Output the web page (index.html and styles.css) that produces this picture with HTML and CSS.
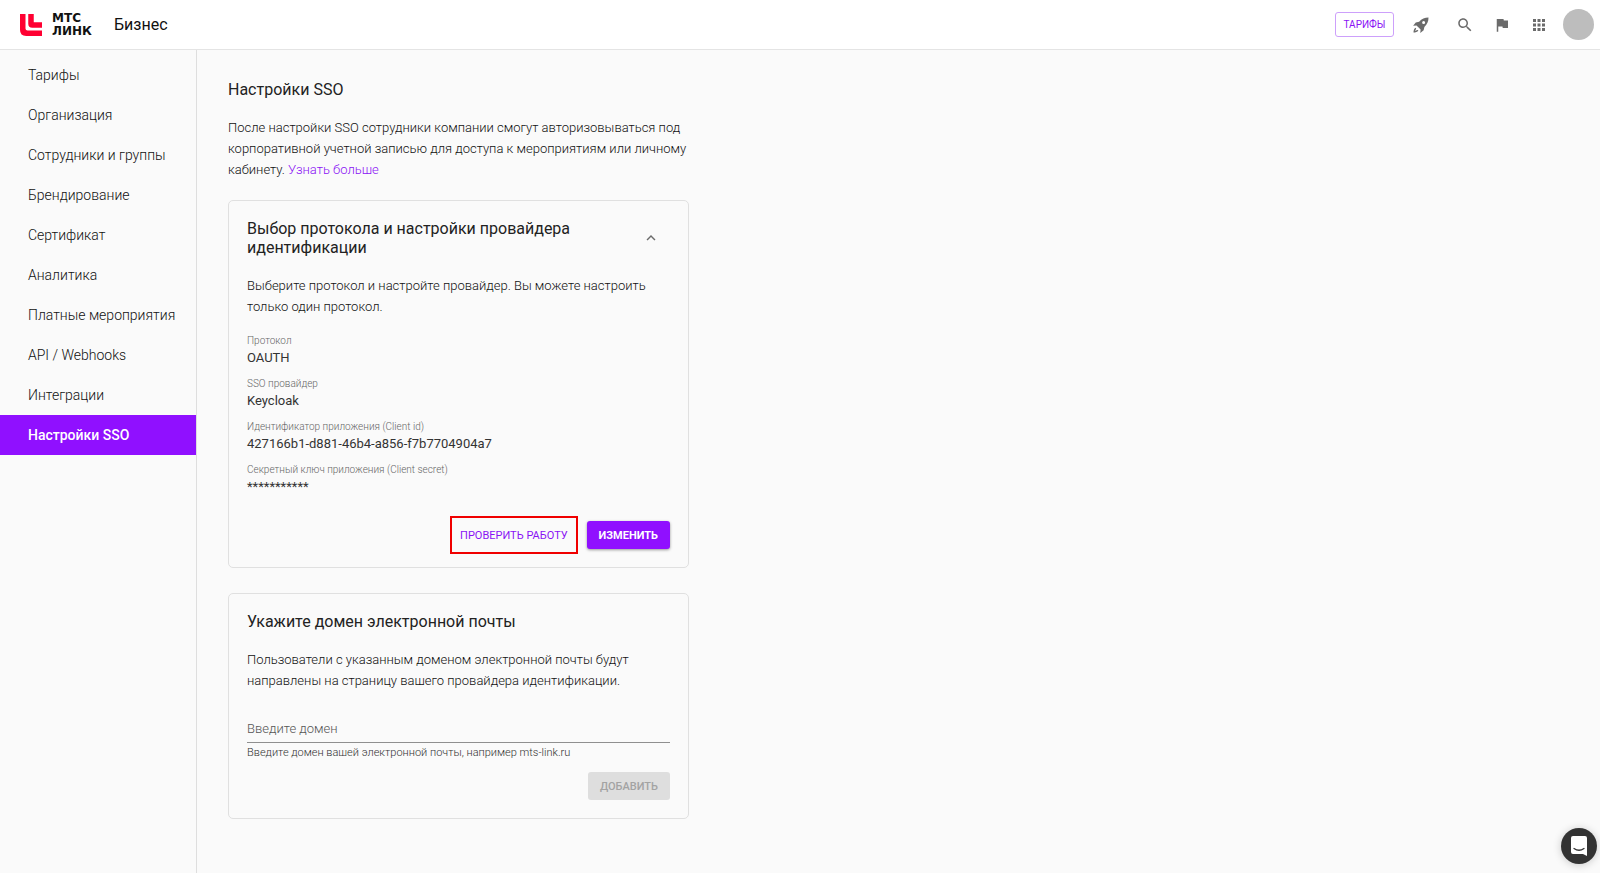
FILE: index.html
```
<!DOCTYPE html>
<html lang="ru">
<head>
    <meta charset="UTF-8">
    <meta name="viewport" content="width=device-width, initial-scale=1.0">
    <title>Настройки SSO</title>
    <link rel="stylesheet" href="styles.css">
</head>
<body>
    <header class="header">
        <a href="#" class="logo">
            <svg width="22" height="22" viewBox="0 0 64 64" fill="#ff0032">
                <path d="M0 0h16v42q0 6 6 6h42v16H18Q0 64 0 46z"/>
                <path d="M24 0h16v24h24v16H36q-12 0-12-12z"/>
            </svg>
            <span class="logo-text">МТС<br>ЛИНК</span>
        </a>
        <span class="section-name">Бизнес</span>
        <div class="header-tools">
            <button type="button" class="tariff-btn">ТАРИФЫ</button>
            <button type="button" class="icon-btn icon-btn-rocket" aria-label="Что нового">
                <svg viewBox="0 0 24 24"><path d="M22 2c-5 0-9 1.500-12.500 5.500L5 8.500 1.500 13l4.500-.5L11.500 18l-.5 4.500 4.500-3.500 1-4.500C20.500 11 22 7 22 2zM15.500 6.500a2 2 0 1 1 0 4 2 2 0 0 1 0-4z" fill-rule="evenodd"/><path d="M5 15.500c-2.500 1-3 4-3 6.500 2.500 0 5.500-.5 6.500-3l-1.500-.5-3 1.500 1.500-3z"/></svg>
            </button>
            <button type="button" class="icon-btn" aria-label="Поиск">
                <svg viewBox="0 0 24 24"><path d="M15.5 14h-.79l-.28-.27C15.41 12.59 16 11.11 16 9.5 16 5.91 13.09 3 9.5 3S3 5.91 3 9.5 5.91 16 9.5 16c1.61 0 3.09-.59 4.23-1.57l.27.28v.79l5 4.99L20.49 19l-4.99-5zm-6 0C7.01 14 5 11.99 5 9.5S7.01 5 9.5 5 14 7.01 14 9.5 11.99 14 9.5 14z"/></svg>
            </button>
            <button type="button" class="icon-btn" aria-label="Уведомления">
                <svg viewBox="0 0 24 24"><path d="M14.4 6L14 4H5v17h2v-7h5.6l.4 2h7V6z"/></svg>
            </button>
            <button type="button" class="icon-btn icon-btn-apps" aria-label="Приложения">
                <svg viewBox="0 0 24 24"><path d="M4 8h4V4H4v4zm6 12h4v-4h-4v4zm-6 0h4v-4H4v4zm0-6h4v-4H4v4zm6 0h4v-4h-4v4zm6-10v4h4V4h-4zm-6 4h4V4h-4v4zm6 6h4v-4h-4v4zm0 6h4v-4h-4v4z"/></svg>
            </button>
            <button type="button" class="avatar" aria-label="Профиль"></button>
        </div>
    </header>

    <div class="layout">
        <nav class="sidebar">
            <a href="#">Тарифы</a>
            <a href="#">Организация</a>
            <a href="#">Сотрудники и группы</a>
            <a href="#">Брендирование</a>
            <a href="#">Сертификат</a>
            <a href="#">Аналитика</a>
            <a href="#">Платные мероприятия</a>
            <a href="#">API / Webhooks</a>
            <a href="#">Интеграции</a>
            <a href="#" class="active">Настройки SSO</a>
        </nav>

        <main class="content">
            <h1>Настройки SSO</h1>
            <p class="intro">После настройки SSO сотрудники компании смогут авторизовываться под<br>корпоративной учетной записью для доступа к мероприятиям или личному<br>кабинету. <a href="#">Узнать больше</a></p>

            <section class="card">
                <div class="card-head">
                    <h2>Выбор протокола и настройки провайдера идентификации</h2>
                    <button type="button" class="collapse-btn" aria-label="Свернуть">
                        <svg viewBox="0 0 24 24"><path d="M12 8l-6 6 1.41 1.41L12 10.83l4.59 4.58L18 14z"/></svg>
                    </button>
                </div>
                <p>Выберите протокол и настройте провайдер. Вы можете настроить только один протокол.</p>
                <dl class="params">
                    <div>
                        <dt>Протокол</dt>
                        <dd>OAUTH</dd>
                    </div>
                    <div>
                        <dt>SSO провайдер</dt>
                        <dd>Keycloak</dd>
                    </div>
                    <div>
                        <dt>Идентификатор приложения (Client id)</dt>
                        <dd>427166b1-d881-46b4-a856-f7b7704904a7</dd>
                    </div>
                    <div>
                        <dt>Секретный ключ приложения (Client secret)</dt>
                        <dd>***********</dd>
                    </div>
                </dl>
                <div class="actions">
                    <button type="button" class="btn btn-check">ПРОВЕРИТЬ РАБОТУ</button>
                    <button type="button" class="btn btn-primary">ИЗМЕНИТЬ</button>
                </div>
            </section>

            <section class="card">
                <h2>Укажите домен электронной почты</h2>
                <p>Пользователи с указанным доменом электронной почты будут направлены на страницу вашего провайдера идентификации.</p>
                <form class="domain-form">
                    <input type="text" id="domain" placeholder="Введите домен" aria-describedby="domain-hint">
                    <label for="domain" id="domain-hint">Введите домен вашей электронной почты, например mts-link.ru</label>
                    <div class="actions">
                        <button type="submit" class="btn btn-disabled" disabled>ДОБАВИТЬ</button>
                    </div>
                </form>
            </section>
        </main>
    </div>

    <button type="button" class="chat-btn" aria-label="Чат">
        <svg width="18" height="20" viewBox="0 0 18 20">
            <path d="M3 0h12q2 0 2 2v18l-4-2H3q-2 0-2-2V2q0-2 2-2z" fill="#fff"/>
            <path d="M4 12.500q5 3.500 10 0" fill="none" stroke="#333" stroke-width="1.300" stroke-linecap="round"/>
        </svg>
    </button>
</body>
</html>
```
FILE: styles.css
```
* {
    box-sizing: border-box;
}
body {
    margin: 0;
    min-height: 100vh;
    display: flex;
    flex-direction: column;
    font-family: Roboto, sans-serif;
    font-size: 13px;
    line-height: 21px;
    color: #333;
    background: #fafafa;
}
a {
    color: #8a12f5;
    text-decoration: none;
}
button {
    font-family: inherit;
    padding: 0;
    border: none;
    background: none;
    cursor: pointer;
}
h1, h2, p, dl, dd {
    margin: 0;
}

/* header */
.header {
    display: flex;
    align-items: center;
    height: 50px;
    padding: 0 6px 0 20px;
    background: #fff;
    border-bottom: 1px solid #e4e4e4;
}
.logo {
    display: flex;
    align-items: center;
    gap: 10px;
    color: #111;
}
.logo-text {
    width: 43px;
    font-family: "DejaVu Sans", sans-serif;
    font-size: 12px;
    font-weight: 700;
    line-height: 13px;
}
.section-name {
    margin-left: 19px;
    font-size: 16px;
    color: #111;
}
.header-tools {
    display: flex;
    align-items: center;
    margin-left: auto;
}
.tariff-btn {
    width: 59px;
    height: 25px;
    margin-right: 18px;
    border: 1px solid #cda0fb;
    border-radius: 3px;
    font-size: 10px;
    font-weight: 400;
    color: #8a12f5;
}
.icon-btn {
    width: 18px;
    height: 18px;
    margin-right: 19px;
}
.icon-btn-rocket {
    margin-right: 26px;
}
.icon-btn-apps {
    margin-right: 15px;
}
.icon-btn svg, .collapse-btn svg {
    display: block;
    width: 100%;
    fill: #6b6b6b;
}
.avatar {
    width: 31px;
    height: 31px;
    border-radius: 50%;
    background: #bdbdbd;
}

/* page */
.layout {
    display: flex;
    flex: 1;
}
.sidebar {
    width: 197px;
    padding-top: 5px;
    border-right: 1px solid #dedede;
}
.sidebar a {
    display: block;
    padding-left: 28px;
    font-size: 14px;
    font-weight: 300;
    line-height: 40px;
    color: #111;
}
.sidebar .active {
    background: #9010ff;
    color: #fff;
    font-weight: 500;
}
.content {
    flex: 1;
    max-width: 492px;
    padding: 30px 0 54px 31px;
}
h1, h2 {
    font-size: 16px;
    font-weight: 400;
    line-height: 19px;
    color: #222;
}
p {
    font-weight: 300;
    color: #111;
}
.intro {
    margin: 18px 0 20px;
    white-space: nowrap;
}

/* cards */
.card {
    padding: 18px;
    border: 1px solid #e0e0e0;
    border-radius: 5px;
}
.card + .card {
    margin-top: 25px;
}
.card p {
    margin-top: 18px;
}
.card-head {
    display: flex;
    align-items: center;
    justify-content: space-between;
}
.card-head h2 {
    max-width: 350px;
}
.collapse-btn {
    width: 18px;
    height: 18px;
    margin-right: 10px;
}
.params {
    display: grid;
    gap: 8px;
    margin-top: 16px;
}
.params dt {
    font-size: 10px;
    font-weight: 300;
    line-height: 15px;
    color: #666;
}
.params dd {
    line-height: 20px;
}
.actions {
    display: flex;
    align-items: center;
    justify-content: flex-end;
    gap: 9px;
}
.params + .actions {
    margin-top: 24px;
}
.btn {
    height: 28px;
    padding: 0 12px;
    border-radius: 3px;
    font-size: 11px;
    font-weight: 500;
}
/* taller frame, must not stretch the row */
.btn-check {
    height: 38px;
    margin: -5px 0;
    padding: 0 8px;
    border: 2px solid #f00000;
    border-radius: 0;
    font-weight: 400;
    color: #8a12f5;
}
.btn-primary {
    background: #9010ff;
    color: #fff;
    font-weight: 700;
    box-shadow: 0 1px 3px rgba(0, 0, 0, 0.4);
}
.btn-disabled {
    background: #dedede;
    color: #a3a3a3;
}
.domain-form {
    margin-top: 23px;
}
.domain-form input {
    display: block;
    width: 100%;
    height: 29px;
    padding: 0;
    border: none;
    border-bottom: 1px solid #8f8f8f;
    outline: none;
    background: none;
    font-family: inherit;
    font-size: 13px;
    font-weight: 300;
}
.domain-form input::placeholder {
    color: #555;
}
.domain-form label {
    display: block;
    margin-bottom: 10px;
    font-size: 11px;
    font-weight: 300;
    line-height: 19px;
    color: #333;
}

.chat-btn {
    position: fixed;
    right: 3px;
    bottom: 9px;
    display: flex;
    align-items: center;
    justify-content: center;
    width: 36px;
    height: 36px;
    border-radius: 50%;
    background: #333;
    box-shadow: 0 1px 8px rgba(0, 0, 0, 0.2);
}
```
